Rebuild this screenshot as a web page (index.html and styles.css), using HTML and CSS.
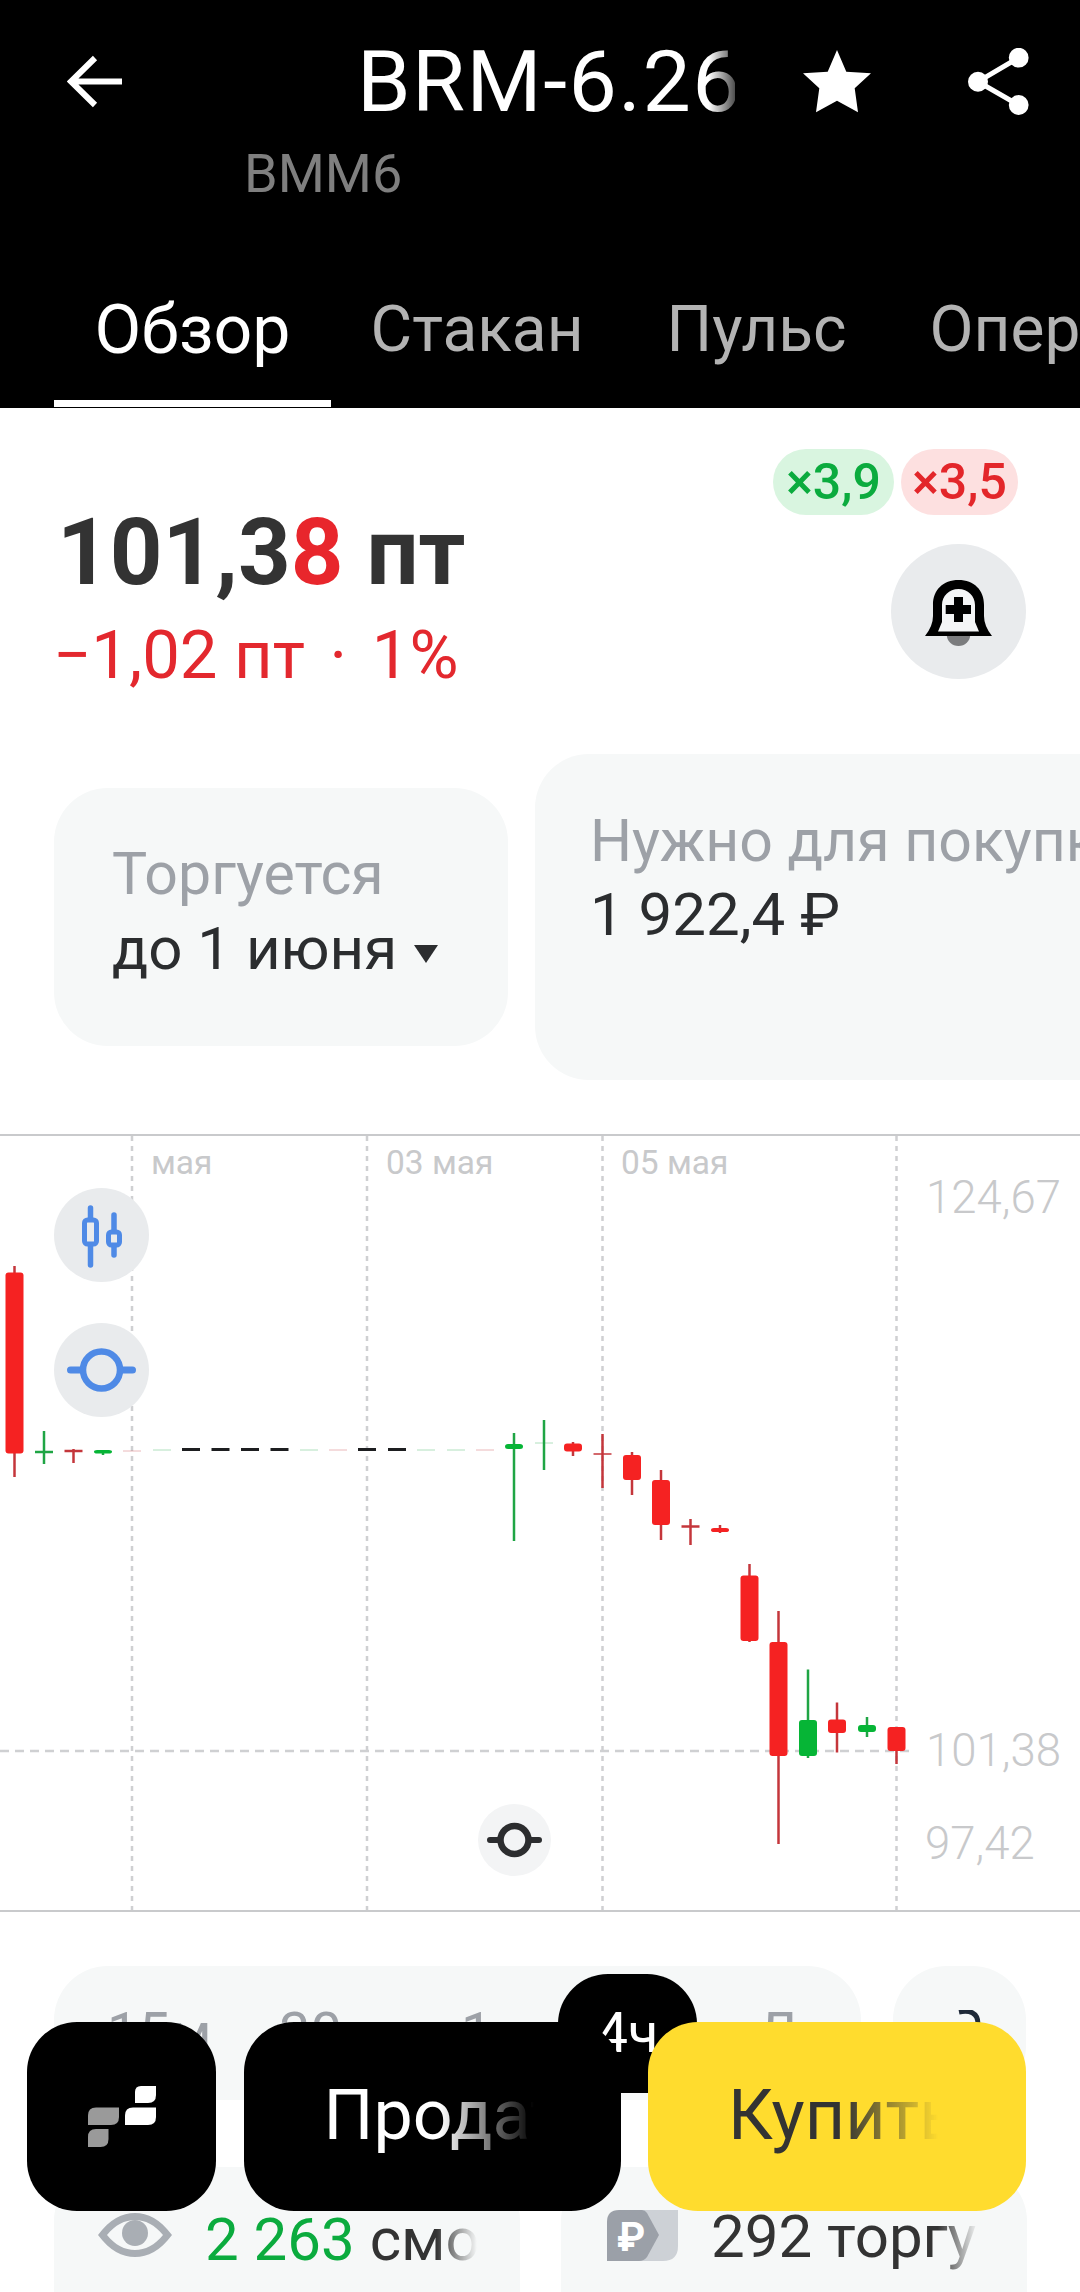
FILE: index.html
```html
<!DOCTYPE html>
<html lang="ru">
<head>
    <meta charset="UTF-8">
    <meta name="viewport" content="width=device-width, initial-scale=1.0">
    <title>BRM-6.26</title>
    <link rel="stylesheet" href="styles.css">
</head>
<body>
    <div class="page">
        <header class="top">
            <div class="title-row">
                <svg class="back" viewBox="0 0 55 53"><path d="M28 3 L4 26.5 L28 50 M4 26.5 H55" fill="none" stroke="#fff" stroke-width="6"/></svg>
                <div class="title">BRM-6.26</div>
                <svg class="star" viewBox="0 0 68 63"><polygon points="34,0 43.3,21.7 68,23.3 51.7,38.3 55,62.3 34,50.7 13,62.3 16.3,38.3 0,23.3 24.7,21.7" fill="#fff"/></svg>
                <svg class="share" viewBox="0 0 62 67"><path d="M50.7 9.7 L10 33.7 L50.7 57" fill="none" stroke="#fff" stroke-width="5"/><circle cx="50.7" cy="9.7" r="9.9" fill="#fff"/><circle cx="10" cy="33.7" r="10" fill="#fff"/><circle cx="50.7" cy="57" r="9.9" fill="#fff"/></svg>
            </div>
            <div class="ticker">BMM6</div>
            <nav class="tabs">
                <div class="tab active">Обзор</div>
                <div class="tab">Стакан</div>
                <div class="tab">Пульс</div>
                <div class="tab">Операции</div>
            </nav>
        </header>

        <section class="price-block">
            <div>
                <div class="price">101,3<span class="red">8</span> пт</div>
                <div class="change">−1,02 пт <span class="dot">·</span> 1%</div>
            </div>
            <div class="price-side">
                <div class="leverage">
                    <span class="lev lev-long">×3,9</span>
                    <span class="lev lev-short">×3,5</span>
                </div>
                <div class="bell">
                    <svg viewBox="0 0 67 66" width="67" height="66">
                        <path d="M21.8 54 H45.2 V55 A11.7 11 0 0 1 21.8 55 Z" fill="#7b7c7e"/>
                        <path d="M33.5 0 C18 0 8 10 8 25 V36 Q8 46 0 56 H67 Q59 46 59 36 V25 C59 10 49 0 33.5 0 Z" fill="#000"/>
                        <path d="M33.5 9 C24 9 17 16 17 25 V42 L13 51.5 H54 L50 42 V25 C50 16 43 9 33.5 9 Z" fill="#f4f5f6"/>
                        <path d="M33.5 17 V42 M20.7 29.5 H46" stroke="#000" stroke-width="9" fill="none"/>
                    </svg>
                </div>
            </div>
        </section>

        <section class="cards">
            <div class="card card-small">
                <div class="card-label">Торгуется</div>
                <div class="card-value">до 1 июня <span class="caret"></span></div>
            </div>
            <div class="card card-big">
                <div class="card-label">Нужно для покупки</div>
                <div class="card-value">1 922,4 ₽</div>
            </div>
        </section>

        <section class="chart">
            <svg class="chart-svg" viewBox="0 1134 1080 778" width="1080" height="778">
                <g class="grid">
                    <line x1="132" y1="1136" x2="132" y2="1910"/>
                    <line x1="367" y1="1136" x2="367" y2="1910"/>
                    <line x1="602.5" y1="1136" x2="602.5" y2="1910"/>
                    <line x1="896.5" y1="1136" x2="896.5" y2="1910"/>
                    <line class="grid-h" x1="0" y1="1751" x2="912" y2="1751"/>
                </g>

                <text class="date" x="151" y="1174">мая</text>
                <text class="date" x="386" y="1174">03 мая</text>
                <text class="date" x="621" y="1174">05 мая</text>
                <text class="axis" x="926" y="1213">124,67</text>
                <text class="axis" x="926" y="1766">101,38</text>
                <text class="axis" x="925" y="1859">97,42</text>

                <!-- пунктир последней цены -->
                <g class="dash">
                    <line x1="182" y1="1449.5" x2="200" y2="1449.5"/>
                    <line x1="211.5" y1="1449.5" x2="229.5" y2="1449.5"/>
                    <line x1="241" y1="1449.5" x2="259" y2="1449.5"/>
                    <line x1="270.5" y1="1449.5" x2="288.5" y2="1449.5"/>
                    <line x1="358" y1="1449.5" x2="376" y2="1449.5"/>
                    <line x1="388" y1="1449.5" x2="406" y2="1449.5"/>
                </g>
                <g class="faint">
                    <line class="w-red" x1="123" y1="1451" x2="141" y2="1451"/>
                    <line class="w-green" x1="153" y1="1450" x2="171" y2="1450"/>
                    <line class="w-green" x1="300" y1="1450" x2="318" y2="1450"/>
                    <line class="w-red" x1="329" y1="1450" x2="347" y2="1450"/>
                    <line class="w-green" x1="417" y1="1450" x2="435" y2="1450"/>
                    <line class="w-green" x1="447" y1="1450" x2="465" y2="1450"/>
                    <line class="w-red" x1="476" y1="1450" x2="494" y2="1450"/>
                    <line class="w-green" x1="535" y1="1443" x2="553" y2="1443"/>
                </g>

                <!-- фитили -->
                <g class="wicks">
                    <line class="w-red" x1="14.5" y1="1266" x2="14.5" y2="1477"/>
                    <line class="w-green" x1="44" y1="1431" x2="44" y2="1464"/>
                    <line class="w-green" x1="35" y1="1452" x2="53" y2="1452"/>
                    <line class="w-red" x1="73.5" y1="1449" x2="73.5" y2="1463"/>
                    <line class="w-red" x1="64.5" y1="1451" x2="82.5" y2="1451"/>
                    <line class="w-green" x1="103" y1="1450" x2="103" y2="1455"/>
                    <line class="w-green" x1="514" y1="1433" x2="514" y2="1541"/>
                    <line class="w-green" x1="544" y1="1420" x2="544" y2="1470"/>
                    <line class="w-red" x1="573" y1="1442" x2="573" y2="1456"/>
                    <line class="w-red" x1="602.5" y1="1434" x2="602.5" y2="1488"/>
                    <line class="w-red thin" x1="593.5" y1="1454" x2="611.5" y2="1454"/>
                    <line class="w-red" x1="632" y1="1452" x2="632" y2="1495"/>
                    <line class="w-red" x1="661" y1="1470" x2="661" y2="1540"/>
                    <line class="w-red" x1="690.5" y1="1519" x2="690.5" y2="1545"/>
                    <line class="w-red" x1="681.5" y1="1526.5" x2="699.5" y2="1526.5"/>
                    <line class="w-red" x1="720" y1="1525" x2="720" y2="1533"/>
                    <line class="w-red" x1="749.5" y1="1564" x2="749.5" y2="1642"/>
                    <line class="w-red" x1="778.5" y1="1611" x2="778.5" y2="1844"/>
                    <line class="w-green" x1="808" y1="1669.5" x2="808" y2="1758"/>
                    <line class="w-red" x1="837" y1="1702.5" x2="837" y2="1752.5"/>
                    <line class="w-green" x1="867" y1="1717" x2="867" y2="1737"/>
                    <line class="w-red" x1="896.5" y1="1750" x2="896.5" y2="1764"/>
                </g>

                <!-- тела свечей -->
                <g class="bodies">
                    <rect class="b-red" x="5.5" y="1272.5" width="18" height="181"/>
                    <rect class="b-green" x="94" y="1450" width="18" height="3.5"/>
                    <rect class="b-green" x="505" y="1444" width="18" height="5"/>
                    <rect class="b-red" x="564" y="1443.5" width="18" height="8"/>
                    <rect class="b-red" x="623" y="1455" width="18" height="25"/>
                    <rect class="b-red" x="652" y="1480" width="18" height="45"/>
                    <rect class="b-red" x="711" y="1528" width="18" height="4"/>
                    <rect class="b-red" x="740.5" y="1575.5" width="18" height="65.5"/>
                    <rect class="b-red" x="769.5" y="1642" width="18" height="114"/>
                    <rect class="b-green" x="799" y="1720" width="18" height="36"/>
                    <rect class="b-red" x="828" y="1719.5" width="18" height="13.5"/>
                    <rect class="b-green" x="858" y="1725" width="18" height="7"/>
                    <rect class="b-red" x="887.5" y="1727" width="18" height="24"/>
                </g>
            </svg>

            <div class="chart-btn chart-btn-type">
                <svg viewBox="0 0 95 94" width="95" height="94">
                    <path d="M36.5 20 V77 M60 27 V67" stroke="#4f8ae6" stroke-width="5.5" stroke-linecap="round" fill="none"/>
                    <rect x="30.5" y="32" width="12" height="24" rx="3" fill="#e9ebed" stroke="#4f8ae6" stroke-width="5"/>
                    <rect x="54.5" y="44" width="11" height="13" rx="3" fill="#e9ebed" stroke="#4f8ae6" stroke-width="5"/>
                </svg>
            </div>
            <div class="chart-btn chart-btn-level">
                <svg viewBox="0 0 95 94" width="95" height="94">
                    <path d="M16.5 47 H27 M68 47 H78.5" stroke="#4f8ae6" stroke-width="7" stroke-linecap="round" fill="none"/>
                    <circle cx="47.5" cy="47" r="18.5" fill="none" stroke="#4f8ae6" stroke-width="6.5"/>
                </svg>
            </div>
            <div class="chart-btn chart-btn-now">
                <svg viewBox="0 0 73 72" width="73" height="72">
                    <path d="M12 36 H21 M52 36 H61" stroke="#2c2d2f" stroke-width="6" stroke-linecap="round" fill="none"/>
                    <circle cx="36.5" cy="36" r="14" fill="none" stroke="#2c2d2f" stroke-width="6.5"/>
                </svg>
            </div>
        </section>

        <section class="periods">
            <div class="period-list">
                <div class="period">15м</div>
                <div class="period period-wide">30м</div>
                <div class="period period-short">1ч</div>
                <div class="period period-active">4ч</div>
                <div class="period">Д</div>
            </div>
            <div class="period-more">
                <svg viewBox="0 0 24 14" width="24" height="14"><path d="M2 2 C12 0 21 2 21 14" fill="none" stroke="#1f2a38" stroke-width="5"/></svg>
            </div>
        </section>

        <section class="stats">
            <div class="stat">
                <svg class="stat-icon" viewBox="0 0 74 44" width="74" height="44">
                    <path fill-rule="evenodd" fill="#a9aeb4" d="M0 22 C12 6 24 0 37 0 C50 0 62 6 74 22 C62 38 50 44 37 44 C24 44 12 38 0 22 Z M9 22 C17 32 27 37 37 37 C47 37 57 32 65 22 C57 12 47 7 37 7 C27 7 17 12 9 22 Z"/>
                    <circle cx="37" cy="20" r="13" fill="#a9aeb4"/>
                </svg>
                <div class="stat-text fade"><span class="green">2 263</span> смотрят</div>
            </div>
            <div class="stat stat-right">
                <svg class="stat-icon" viewBox="0 0 71 51" width="71" height="51">
                    <path d="M30 0 H71 V36 Q71 51 56 51 H30 Z" fill="#cdd1d6"/>
                    <path d="M12 0 H35 Q38 0 40 3 L52 25 L40 47 Q37 51 32 51 H0 V12 Q0 0 12 0 Z" fill="#9ba0a8"/>
                    <text class="rub-mark" x="10" y="41">₽</text>
                </svg>
                <div class="stat-text fade">292 торгуют</div>
            </div>
        </section>

        <!-- плавающая панель поверх контента -->
        <div class="actions">
            <div class="action action-logo">
                <svg viewBox="0 0 69 61" width="69" height="61">
                    <path d="M54 0 H69 V9 Q69 17 61 17 H48 V6 Q48 0 54 0 Z" fill="#fff"/>
                    <path d="M46 21.5 H69 V31 Q69 39 61 39 H38 V29.5 Q38 21.5 46 21.5 Z" fill="#fff"/>
                    <path d="M9 21.5 H32 V31 Q32 39 24 39 H1 V29.5 Q1 21.5 9 21.5 Z" fill="#9a9a9a"/>
                    <path d="M9 43 H21.5 V53 Q21.5 61 13.5 61 H1 V51 Q1 43 9 43 Z" fill="#9a9a9a"/>
                </svg>
            </div>
            <div class="action action-sell"><span class="fade-btn">Продать</span></div>
            <div class="action action-buy"><span class="fade-btn">Купить</span></div>
        </div>
    </div>
</body>
</html>
```

FILE: styles.css
```css
*{
    box-sizing: border-box;
}

body{
    margin: 0;
    background: #fff;
    font-family: Roboto, "Noto Sans", sans-serif;
    color: #2f3133;
}

.page{
    position: relative;
    width: 1080px;
    height: 2292px;
    overflow: hidden;
}

.top{
    background: #000;
    height: 408px;
    color: #fff;
    overflow: hidden;
}

.title-row{
    display: flex;
    align-items: center;
    height: 67px;
    margin-top: 48px;
    padding-left: 67px;
}

.back{
    width: 55px;
    height: 53px;
}

.title{
    margin-left: 235px;
    width: 378px;
    font-size: 86px;
    letter-spacing: 1.5px;
    line-height: 67px;
    white-space: nowrap;
    -webkit-mask-image: linear-gradient(90deg, #000 93%, rgba(0,0,0,.3) 100%);
    mask-image: linear-gradient(90deg, #000 93%, rgba(0,0,0,.3) 100%);
}

.star{
    width: 68px;
    height: 63px;
    margin-left: 68px;
}

.share{
    width: 62px;
    height: 67px;
    margin-left: 97px;
}

.ticker{
    margin: 34px 0 0 244px;
    font-size: 54px;
    line-height: 50px;
    color: #7f7f7f;
}

.tabs{
    display: flex;
    margin-top: 91px;
    padding-left: 54px;
    white-space: nowrap;
}

.tab{
    flex: none;
    padding: 0 41.5px 30px;
    font-size: 64px;
    line-height: 80px;
    color: #b3b3b3;
    border-bottom: 7px solid transparent;
}

.tab.active{
    width: 277px;
    margin-right: -2px;
    padding: 0 0 30px;
    text-align: center;
    font-size: 68px;
    color: #fff;
    border-bottom-color: #fff;
}

.price-block{
    display: flex;
    justify-content: space-between;
    height: 346px;
    padding: 41px 54px 0 54px;
}

.price{
    margin: 54px 0 0 3px;
    font-size: 92px;
    line-height: 100px;
    font-weight: 700;
    color: #333;
}

.red{
    color: #e8262c;
}

.change{
    margin: 14px 0 0 -1px;
    font-size: 67px;
    line-height: 76px;
    color: #e3282e;
}

.dot{
    margin: 0 8px;
}

.price-side{
    display: flex;
    flex-direction: column;
    align-items: flex-end;
}

.leverage{
    display: flex;
    gap: 7px;
    margin-right: 8px;
}

.lev{
    width: 121px;
    height: 66px;
    border-radius: 33px;
    text-align: center;
    font-size: 50px;
    line-height: 66px;
    font-weight: 500;
}

.lev-long{
    background: #d9f5e0;
    color: #0bab3e;
}

.lev-short{
    width: 117px;
    background: #fde0e0;
    color: #e3262a;
}

.bell{
    display: flex;
    justify-content: center;
    align-items: center;
    width: 135px;
    height: 135px;
    margin-top: 29px;
    border-radius: 50%;
    background: #e9ebed;
}

.bell svg{
    margin-top: 2px;
}

.cards{
    display: flex;
    align-items: center;
    gap: 27px;
    height: 326px;
    padding-left: 54px;
    white-space: nowrap;
}

.card{
    flex: none;
    border-radius: 54px;
    background: #f6f8f8;
}

.card-small{
    width: 454px;
    height: 258px;
    padding: 53px 0 0 58px;
}

.card-big{
    width: 800px;
    height: 326px;
    padding: 54px 0 0 55px;
}

.card-label{
    font-size: 59px;
    line-height: 66px;
    color: #9da1a7;
}

.card-value{
    margin-top: 9px;
    font-size: 60px;
    line-height: 66px;
    color: #2b2d2f;
}

.card-big .card-value{
    margin-top: 8px;
}

.caret{
    display: inline-block;
    margin-left: 2px;
    border-left: 12px solid transparent;
    border-right: 12px solid transparent;
    border-top: 18px solid #2b2d2f;
    vertical-align: 6px;
}

.chart{
    position: relative;
    height: 778px;
    margin-top: 54px;
    border-top: 2px solid #c9cacc;
    border-bottom: 2px solid #c9cacc;
}

.chart-svg{
    display: block;
    margin-top: -2px;
}

.grid line{
    stroke: #cfd0d2;
    stroke-width: 2.5;
    stroke-dasharray: 5 5;
}

.grid .grid-h{
    stroke-dasharray: 9 6;
}

.date{
    font-size: 33.5px;
    fill: #c8c9cb;
}

.axis{
    font-size: 45.5px;
    font-weight: 300;
    fill: #c8c9cb;
}

.dash line{
    stroke: #1d1e20;
    stroke-width: 3;
}

.faint line{
    stroke-width: 1;
    opacity: .35;
}

.wicks line{
    stroke-width: 2.5;
}

.w-red{
    stroke: #c4363b;
}

.w-green{
    stroke: #1fa544;
}

.wicks .thin{
    stroke-width: 1.5;
}

.bodies rect{
    rx: 3px;
}

.b-red{
    fill: #f52222;
}

.b-green{
    fill: #06b536;
}

.chart-btn{
    position: absolute;
    border-radius: 50%;
}

.chart-btn svg{
    display: block;
}

.chart-btn-type{
    left: 54px;
    top: 52px;
    width: 95px;
    height: 94px;
    background: #e9ebed;
}

.chart-btn-level{
    left: 54px;
    top: 187px;
    width: 95px;
    height: 94px;
    background: #e9ebed;
}

.chart-btn-now{
    left: 478px;
    top: 668px;
    width: 73px;
    height: 72px;
    background: #f3f4f5;
}

.periods{
    display: flex;
    gap: 32px;
    height: 134px;
    margin-top: 54px;
    padding: 0 54px;
}

.period-list{
    display: flex;
    align-items: center;
    width: 807px;
    height: 100%;
    padding-left: 53px;
    border-radius: 54px;
    background: #f6f8f8;
}

.period{
    flex: none;
    width: 172px;
    font-size: 56px;
    line-height: 119px;
    color: #9da1a7;
}

.period-wide{
    width: 182px;
}

.period-short{
    width: 97px;
}

.period-active{
    width: 139px;
    height: 119px;
    margin-right: 60px;
    border-radius: 50px;
    background: #000;
    color: #fff;
    text-align: center;
}

.period-more{
    width: 133px;
    height: 100%;
    padding: 44px 0 0 64px;
    border-radius: 54px;
    background: #f6f8f8;
}

.period-more svg{
    display: block;
}

.stats{
    display: flex;
    gap: 41px;
    height: 200px;
    margin-top: 67px;
    padding: 0 54px;
}

.stat{
    flex: none;
    display: flex;
    width: 466px;
    height: 100%;
    padding: 46px 0 0 44px;
    border-radius: 54px;
    background: #f6f8f8;
}

.stat-right{
    padding-left: 46px;
    padding-top: 43px;
}

.stat-icon{
    flex: none;
}

.rub-mark{
    font-size: 40px;
    font-weight: 700;
    fill: #fff;
}

.stat-text{
    margin: -6px 0 0 33px;
    width: 272px;
    font-size: 60px;
    line-height: 66px;
    white-space: nowrap;
    overflow: hidden;
    color: #333;
}

.stat-right .stat-text{
    width: 267px;
}

.green{
    color: #0bab3e;
}

.fade{
    -webkit-mask-image: linear-gradient(90deg, #000 85%, transparent 100%);
    mask-image: linear-gradient(90deg, #000 85%, transparent 100%);
}

.actions{
    position: absolute;
    left: 27px;
    top: 2022px;
    display: flex;
    gap: 27.5px;
}

.action{
    display: flex;
    align-items: center;
    height: 189px;
    border-radius: 50px;
    font-size: 70px;
}

.action-logo{
    justify-content: center;
    width: 189px;
    background: #000;
}

.action-sell{
    width: 377px;
    padding-left: 80px;
    padding-bottom: 4px;
    background: #000;
    color: #fff;
}

.action-buy{
    width: 378px;
    padding-left: 80px;
    padding-bottom: 4px;
    background: #ffdc2e;
    color: #333;
}

.fade-btn{
    display: block;
    width: 210px;
    overflow: hidden;
    white-space: nowrap;
    -webkit-mask-image: linear-gradient(90deg, #000 55%, transparent 100%);
    mask-image: linear-gradient(90deg, #000 55%, transparent 100%);
}
```
